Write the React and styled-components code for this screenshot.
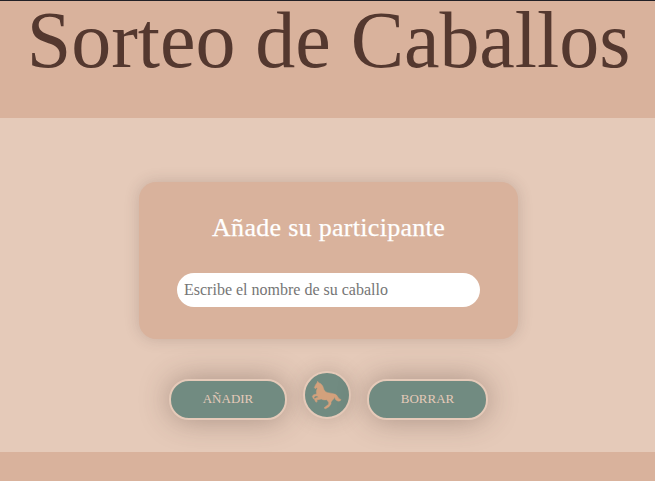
import React from "react";
import styled, { createGlobalStyle } from "styled-components";

const GlobalStyle = createGlobalStyle`
  * { box-sizing: border-box; }
  body {
    margin: 0;
    background: #d9b29c;
    font-family: "Liberation Serif", serif;
  }
`;

const Page = styled.div`
  height: 481px;
  border-top: 1px solid #222026;
  background: #d9b29c;
`;

const Header = styled.header`
  height: 117px;
  padding-left: 2px;
  text-align: center;
`;

const Title = styled.h1`
  margin: 0;
  font: 400 80px/78px "Liberation Serif", serif;
  letter-spacing: -0.05px;
  color: #54382f;
  white-space: nowrap;
`;

const Main = styled.main`
  height: 334px;
  padding-top: 64px;
  padding-left: 2px;
  background: #e5cab9;
  display: flex;
  flex-direction: column;
  align-items: center;
  overflow: hidden;
`;

const Card = styled.section`
  width: 379px;
  height: 157px;
  padding: 30px 38px 0;
  border-radius: 17px;
  background: #d9b29c;
  box-shadow: 0 0 15px rgba(70, 50, 50, 0.2);
`;

const CardTitle = styled.h2`
  margin: 0 0 29px;
  font: 400 26px/32px "Liberation Serif", serif;
  letter-spacing: 0.3px;
  text-align: center;
  white-space: nowrap;
  color: #fff;
  -webkit-text-stroke: 0.25px #fff;
`;

const NameInput = styled.input`
  display: block;
  width: 303px;
  height: 34px;
  padding: 0 7px;
  border: 0;
  outline: 0;
  border-radius: 17px;
  background: #fff;
  font: 400 16px "Liberation Serif", serif;
  &::placeholder { color: #757575; opacity: 1; }
`;

const Actions = styled.div`
  display: flex;
  gap: 16px;
  margin-top: 32px;
`;

const Button = styled.button`
  width: ${(p) => p.$width}px;
  height: 41px;
  margin-top: 8px;
  padding: 0 0 2px;
  border: 2px solid #e5cab9;
  border-radius: 20px;
  background: #718b81;
  color: #e5cab9;
  font: 400 13px "Liberation Serif", serif;
  box-shadow: 0 0 30px rgba(70, 50, 45, 0.38);
`;

const RoundButton = styled(Button)`
  height: 48px;
  margin-top: 0;
  padding: 0;
  border-radius: 50%;
  display: grid;
  place-items: center;
  box-shadow: 0 0 20px rgba(70, 50, 45, 0.22);
`;

const HorseSvg = styled.svg`
  display: block;
  width: 44px;
  height: 44px;
`;

const Horse = () => (
  <HorseSvg viewBox="0 0 132 132" aria-hidden="true">
    <path
      fill="#d3a17c"
      stroke="#d3a17c"
      strokeWidth="1.5"
      strokeLinejoin="round"
      d="M38 25 L41 29 Q49 31 53 39 L57 50 Q60 57 68 59 Q77 60 84 62 Q95 63 98 71 Q101 78 108 80 Q105 86 98 84 Q91 82 88 71 Q88 77 82 82 L78 87 L78 93 L72 101 L62 107 L57 105 L64 99 L71 94 L71 88 L65 80 Q56 82 49 78 L39 80 L35 80 L37 85 L33 88 L28 79 L32 75 L40 73 L37 69 L31 69 L27 73 L29 77 L25 77 L22 70 L26 65 L35 63 L34 55 L37 45 L34 44 L31 47 L28 44 L32 35 L36 30 Z"
    />
  </HorseSvg>
);

export default function App() {
  return (
    <>
      <GlobalStyle />
      <Page>
        <Header>
          <Title>Sorteo de Caballos</Title>
        </Header>
        <Main>
          <Card>
            <CardTitle>Añade su participante</CardTitle>
            <NameInput placeholder="Escribe el nombre de su caballo" />
          </Card>
          <Actions>
            <Button $width={118}>AÑADIR</Button>
            <RoundButton $width={48} aria-label="Sortear">
              <Horse />
            </RoundButton>
            <Button $width={121}>BORRAR</Button>
          </Actions>
        </Main>
      </Page>
    </>
  );
}
